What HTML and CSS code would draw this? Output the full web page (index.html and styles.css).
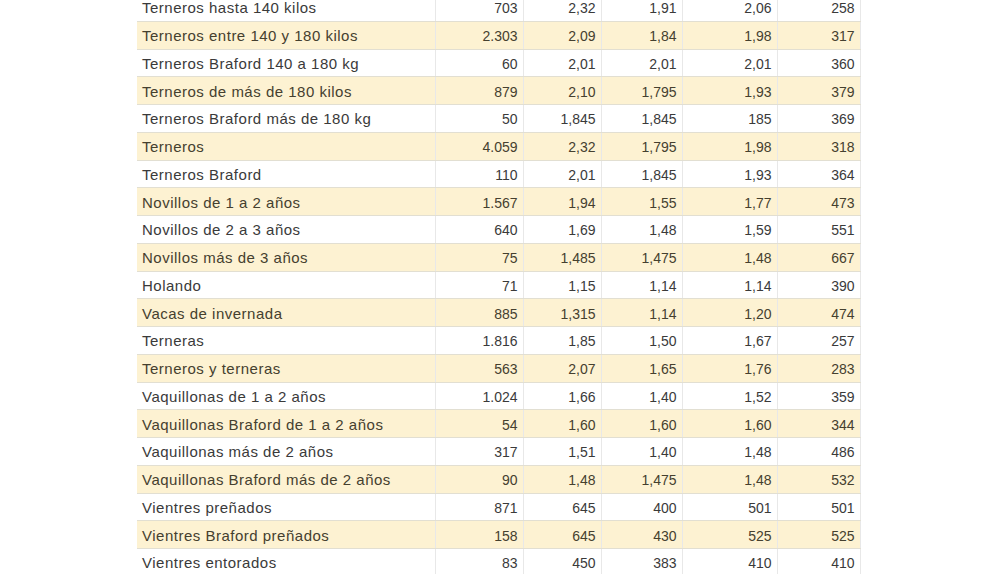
FILE: index.html
```html
<!DOCTYPE html>
<html lang="es">
<head>
<meta charset="utf-8">
<title>Precios</title>
<link rel="stylesheet" href="styles.css">
</head>
<body>
<main class="page">
<table class="grid">
<colgroup>
<col class="c-name"><col class="c-a"><col class="c-b"><col class="c-c"><col class="c-d"><col class="c-e">
</colgroup>
<tbody>
<tr><td>Terneros hasta 140 kilos</td><td>703</td><td>2,32</td><td>1,91</td><td>2,06</td><td>258</td></tr>
<tr class="alt"><td>Terneros entre 140 y 180 kilos</td><td>2.303</td><td>2,09</td><td>1,84</td><td>1,98</td><td>317</td></tr>
<tr><td>Terneros Braford 140 a 180 kg</td><td>60</td><td>2,01</td><td>2,01</td><td>2,01</td><td>360</td></tr>
<tr class="alt"><td>Terneros de más de 180 kilos</td><td>879</td><td>2,10</td><td>1,795</td><td>1,93</td><td>379</td></tr>
<tr><td>Terneros Braford más de 180 kg</td><td>50</td><td>1,845</td><td>1,845</td><td>185</td><td>369</td></tr>
<tr class="alt"><td>Terneros</td><td>4.059</td><td>2,32</td><td>1,795</td><td>1,98</td><td>318</td></tr>
<tr><td>Terneros Braford</td><td>110</td><td>2,01</td><td>1,845</td><td>1,93</td><td>364</td></tr>
<tr class="alt"><td>Novillos de 1 a 2 años</td><td>1.567</td><td>1,94</td><td>1,55</td><td>1,77</td><td>473</td></tr>
<tr><td>Novillos de 2 a 3 años</td><td>640</td><td>1,69</td><td>1,48</td><td>1,59</td><td>551</td></tr>
<tr class="alt"><td>Novillos más de 3 años</td><td>75</td><td>1,485</td><td>1,475</td><td>1,48</td><td>667</td></tr>
<tr><td>Holando</td><td>71</td><td>1,15</td><td>1,14</td><td>1,14</td><td>390</td></tr>
<tr class="alt"><td>Vacas de invernada</td><td>885</td><td>1,315</td><td>1,14</td><td>1,20</td><td>474</td></tr>
<tr><td>Terneras</td><td>1.816</td><td>1,85</td><td>1,50</td><td>1,67</td><td>257</td></tr>
<tr class="alt"><td>Terneros y terneras</td><td>563</td><td>2,07</td><td>1,65</td><td>1,76</td><td>283</td></tr>
<tr><td>Vaquillonas de 1 a 2 años</td><td>1.024</td><td>1,66</td><td>1,40</td><td>1,52</td><td>359</td></tr>
<tr class="alt"><td>Vaquillonas Braford de 1 a 2 años</td><td>54</td><td>1,60</td><td>1,60</td><td>1,60</td><td>344</td></tr>
<tr><td>Vaquillonas más de 2 años</td><td>317</td><td>1,51</td><td>1,40</td><td>1,48</td><td>486</td></tr>
<tr class="alt"><td>Vaquillonas Braford más de 2 años</td><td>90</td><td>1,48</td><td>1,475</td><td>1,48</td><td>532</td></tr>
<tr><td>Vientres preñados</td><td>871</td><td>645</td><td>400</td><td>501</td><td>501</td></tr>
<tr class="alt"><td>Vientres Braford preñados</td><td>158</td><td>645</td><td>430</td><td>525</td><td>525</td></tr>
<tr><td>Vientres entorados</td><td>83</td><td>450</td><td>383</td><td>410</td><td>410</td></tr>
</tbody>
</table>
</main>
</body>
</html>
```
FILE: styles.css
```css
html, body {
  margin: 0;
  padding: 0;
  background: #ffffff;
}
body {
  width: 1000px;
  height: 574px;
  overflow: hidden;
}
.page {
  padding-left: 137px;
}
.grid {
  border-collapse: collapse;
  table-layout: fixed;
  width: 723px;
  margin-top: -7px;
  font-family: "Liberation Sans", Arial, sans-serif;
  font-size: 14px;
  color: #3a3a3a;
}
.c-name { width: 298px; }
.c-a { width: 88px; }
.c-b { width: 78px; }
.c-c { width: 81px; }
.c-d { width: 95px; }
.c-e { width: 83px; }
.grid tr {
  height: 27.75px;
}
.grid td {
  padding: 2px 5px 0;
  border-top: 1px solid #e2dfd2;
  border-bottom: 1px solid #e2dfd2;
  border-left: 1px solid #e8e8e8;
  border-right: 1px solid #e8e8e8;
  text-align: right;
  white-space: nowrap;
  line-height: 16px;
}
.grid td:first-child {
  text-align: left;
  border-left: none;
  font-size: 15px;
  letter-spacing: 0.5px;
}
.grid tr.alt td {
  background: #fdf2d2;
  color: #45402f;
}
```
